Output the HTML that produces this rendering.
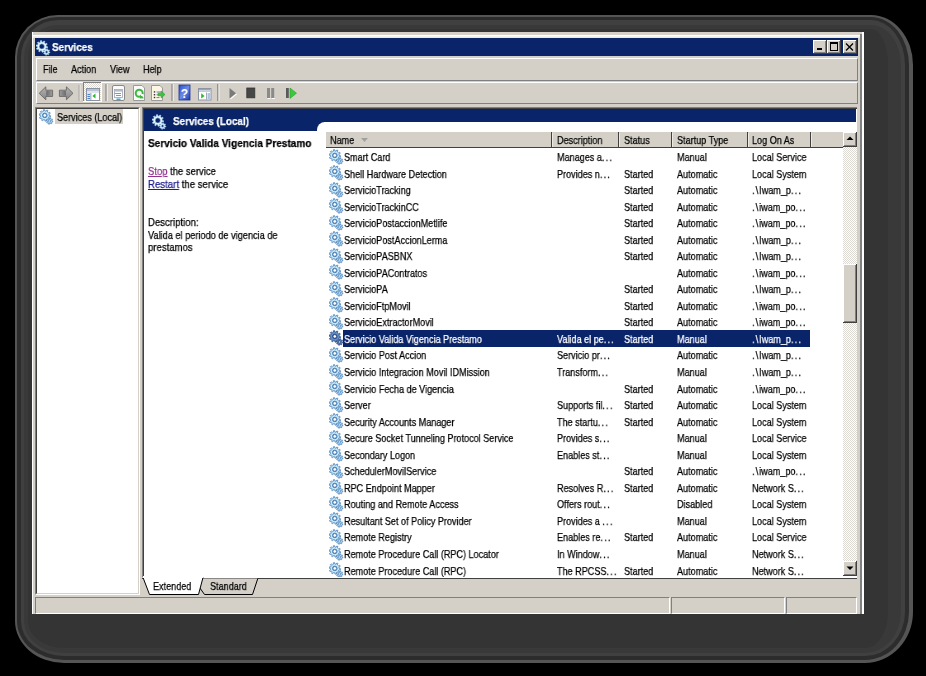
<!DOCTYPE html>
<html><head><meta charset="utf-8"><style>
*{margin:0;padding:0;box-sizing:border-box}
html,body{width:926px;height:676px;overflow:hidden;background:#000}
body{position:relative;font-family:"Liberation Sans",sans-serif;font-size:11px;color:#000}
.a{position:absolute}
.t{position:absolute;white-space:nowrap;transform-origin:0 0;line-height:13px;font-size:11px;will-change:transform;-webkit-text-stroke:0.25px currentColor}
.up{border-top:1px solid #fff;border-left:1px solid #fff;border-right:1px solid #808080;border-bottom:1px solid #808080}
.dn{border-top:1px solid #808080;border-left:1px solid #808080;border-right:1px solid #fff;border-bottom:1px solid #fff}
.ic{position:absolute;width:16px;height:16px}
.el{letter-spacing:1.5px}
.bs{margin:0 1px 0 1.5px}
</style></head><body>
<svg width="0" height="0" style="position:absolute"><defs>
<symbol id="gear" viewBox="0 0 16 16">
 <path d="M13.00 12.00 L13.89 12.21 L13.72 13.07 L12.82 12.92 L12.30 13.70 L12.30 13.70 L12.78 14.48 L12.05 14.96 L11.52 14.22 L10.60 14.40 L10.60 14.40 L10.39 15.29 L9.53 15.12 L9.68 14.22 L8.90 13.70 L8.90 13.70 L8.12 14.18 L7.64 13.45 L8.38 12.92 L8.20 12.00 L8.20 12.00 L7.31 11.79 L7.48 10.93 L8.38 11.08 L8.90 10.30 L8.90 10.30 L8.42 9.52 L9.15 9.04 L9.68 9.78 L10.60 9.60 L10.60 9.60 L10.81 8.71 L11.67 8.88 L11.52 9.78 L12.30 10.30 L12.30 10.30 L13.08 9.82 L13.56 10.55 L12.82 11.08 L13.00 12.00Z M9.5 12a1.1 1.1 0 1 0 2.2 0a1.1 1.1 0 1 0 -2.2 0Z" fill="#b8e0f6" fill-rule="evenodd" stroke="#5286bc" stroke-width="0.8"/>
 <path d="M10.20 6.40 L11.59 6.69 L11.40 7.91 L9.98 7.76 L9.36 8.99 L9.36 8.99 L10.32 10.04 L9.44 10.92 L8.39 9.96 L7.16 10.58 L7.16 10.58 L7.31 12.00 L6.09 12.19 L5.80 10.80 L4.44 10.58 L4.44 10.58 L3.73 11.82 L2.63 11.26 L3.21 9.96 L2.24 8.99 L2.24 8.99 L0.94 9.57 L0.38 8.47 L1.62 7.76 L1.40 6.40 L1.40 6.40 L0.01 6.11 L0.20 4.89 L1.62 5.04 L2.24 3.81 L2.24 3.81 L1.28 2.76 L2.16 1.88 L3.21 2.84 L4.44 2.22 L4.44 2.22 L4.29 0.80 L5.51 0.61 L5.80 2.00 L7.16 2.22 L7.16 2.22 L7.87 0.98 L8.97 1.54 L8.39 2.84 L9.36 3.81 L9.36 3.81 L10.66 3.23 L11.22 4.33 L9.98 5.04 L10.20 6.40Z M4.0 6.4a1.8 1.8 0 1 0 3.6 0a1.8 1.8 0 1 0 -3.6 0Z" fill="#c8ecfa" fill-rule="evenodd" stroke="#4f82b8" stroke-width="0.8"/>
 <circle cx="5.8" cy="6.4" r="2.3" fill="none" stroke="#4e7fb6" stroke-width="1"/>
</symbol>
<symbol id="gearw" viewBox="0 0 16 16">
 <path d="M13.00 12.00 L13.89 12.21 L13.72 13.07 L12.82 12.92 L12.30 13.70 L12.30 13.70 L12.78 14.48 L12.05 14.96 L11.52 14.22 L10.60 14.40 L10.60 14.40 L10.39 15.29 L9.53 15.12 L9.68 14.22 L8.90 13.70 L8.90 13.70 L8.12 14.18 L7.64 13.45 L8.38 12.92 L8.20 12.00 L8.20 12.00 L7.31 11.79 L7.48 10.93 L8.38 11.08 L8.90 10.30 L8.90 10.30 L8.42 9.52 L9.15 9.04 L9.68 9.78 L10.60 9.60 L10.60 9.60 L10.81 8.71 L11.67 8.88 L11.52 9.78 L12.30 10.30 L12.30 10.30 L13.08 9.82 L13.56 10.55 L12.82 11.08 L13.00 12.00Z M9.4 12a1.2 1.2 0 1 0 2.4 0a1.2 1.2 0 1 0 -2.4 0Z" fill="#d8f2fc" fill-rule="evenodd" stroke="#a8d0ee" stroke-width="0.6"/>
 <path d="M10.20 6.40 L11.59 6.69 L11.40 7.91 L9.98 7.76 L9.36 8.99 L9.36 8.99 L10.32 10.04 L9.44 10.92 L8.39 9.96 L7.16 10.58 L7.16 10.58 L7.31 12.00 L6.09 12.19 L5.80 10.80 L4.44 10.58 L4.44 10.58 L3.73 11.82 L2.63 11.26 L3.21 9.96 L2.24 8.99 L2.24 8.99 L0.94 9.57 L0.38 8.47 L1.62 7.76 L1.40 6.40 L1.40 6.40 L0.01 6.11 L0.20 4.89 L1.62 5.04 L2.24 3.81 L2.24 3.81 L1.28 2.76 L2.16 1.88 L3.21 2.84 L4.44 2.22 L4.44 2.22 L4.29 0.80 L5.51 0.61 L5.80 2.00 L7.16 2.22 L7.16 2.22 L7.87 0.98 L8.97 1.54 L8.39 2.84 L9.36 3.81 L9.36 3.81 L10.66 3.23 L11.22 4.33 L9.98 5.04 L10.20 6.40Z M3.1999999999999997 6.4a2.6 2.6 0 1 0 5.2 0a2.6 2.6 0 1 0 -5.2 0Z" fill="#e4f6fe" fill-rule="evenodd" stroke="#b0d8f0" stroke-width="0.6"/>
</symbol>
<symbol id="gearsel" viewBox="0 0 16 16">
 <path d="M13.00 12.00 L13.89 12.21 L13.72 13.07 L12.82 12.92 L12.30 13.70 L12.30 13.70 L12.78 14.48 L12.05 14.96 L11.52 14.22 L10.60 14.40 L10.60 14.40 L10.39 15.29 L9.53 15.12 L9.68 14.22 L8.90 13.70 L8.90 13.70 L8.12 14.18 L7.64 13.45 L8.38 12.92 L8.20 12.00 L8.20 12.00 L7.31 11.79 L7.48 10.93 L8.38 11.08 L8.90 10.30 L8.90 10.30 L8.42 9.52 L9.15 9.04 L9.68 9.78 L10.60 9.60 L10.60 9.60 L10.81 8.71 L11.67 8.88 L11.52 9.78 L12.30 10.30 L12.30 10.30 L13.08 9.82 L13.56 10.55 L12.82 11.08 L13.00 12.00Z M9.5 12a1.1 1.1 0 1 0 2.2 0a1.1 1.1 0 1 0 -2.2 0Z" fill="#5a82b8" fill-rule="evenodd" stroke="#2a4c88" stroke-width="0.8"/>
 <path d="M10.20 6.40 L11.59 6.69 L11.40 7.91 L9.98 7.76 L9.36 8.99 L9.36 8.99 L10.32 10.04 L9.44 10.92 L8.39 9.96 L7.16 10.58 L7.16 10.58 L7.31 12.00 L6.09 12.19 L5.80 10.80 L4.44 10.58 L4.44 10.58 L3.73 11.82 L2.63 11.26 L3.21 9.96 L2.24 8.99 L2.24 8.99 L0.94 9.57 L0.38 8.47 L1.62 7.76 L1.40 6.40 L1.40 6.40 L0.01 6.11 L0.20 4.89 L1.62 5.04 L2.24 3.81 L2.24 3.81 L1.28 2.76 L2.16 1.88 L3.21 2.84 L4.44 2.22 L4.44 2.22 L4.29 0.80 L5.51 0.61 L5.80 2.00 L7.16 2.22 L7.16 2.22 L7.87 0.98 L8.97 1.54 L8.39 2.84 L9.36 3.81 L9.36 3.81 L10.66 3.23 L11.22 4.33 L9.98 5.04 L10.20 6.40Z M4.0 6.4a1.8 1.8 0 1 0 3.6 0a1.8 1.8 0 1 0 -3.6 0Z" fill="#6a90c4" fill-rule="evenodd" stroke="#2a4c88" stroke-width="0.8"/>
 <circle cx="5.8" cy="6.4" r="2.3" fill="none" stroke="#2a4c88" stroke-width="0.9"/>
</symbol>
<pattern id="dith" width="2" height="2" patternUnits="userSpaceOnUse"><rect width="2" height="2" fill="#fff"/><rect width="1" height="1" fill="#dcd9d2"/><rect x="1" y="1" width="1" height="1" fill="#dcd9d2"/></pattern>
</defs></svg>
<div class="a" style="left:15px;top:15px;width:898px;height:648px;border-radius:43px 42px 48px 49px / 42px 50px 51px 42px;background:#555"></div>
<div class="a" style="left:17px;top:17px;width:892px;height:643px;border-radius:41px 38px 44px 47px / 40px 48px 48px 39px;background:#2c2c2c"></div>
<div class="a" style="left:21px;top:20px;width:884px;height:636px;border-radius:37px 34px 40px 43px / 37px 45px 44px 35px;background:#404040"></div>
<div class="a" style="left:24px;top:25px;width:877px;height:628px;border-radius:34px 30px 36px 40px / 32px 40px 41px 32px;background:#393939"></div>
<div class="a" style="left:28px;top:29px;width:860px;height:619px;border-radius:30px 17px 23px 36px / 28px 36px 36px 27px;background:#343434"></div>
<div class="a" style="left:32px;top:32px;width:832px;height:582px;background:#d4d0c8"></div>
<div class="a" style="left:32px;top:32px;width:1px;height:582px;background:#fff"></div>
<div class="a" style="left:33px;top:35px;width:827px;height:1px;background:#fff"></div>
<div class="a" style="left:33px;top:36px;width:827px;height:1px;background:#f4f2ec"></div>
<div class="a" style="left:33px;top:37px;width:827px;height:1px;background:#ece9d8"></div>
<div class="a" style="left:860px;top:34px;width:2px;height:580px;background:#808080"></div>
<div class="a" style="left:862px;top:32px;width:2px;height:582px;background:#fff"></div>
<div class="a" style="left:35px;top:38px;width:823px;height:18px;background:#0a246a"></div>
<svg class="ic" style="left:36px;top:39.5px;width:16px;height:16px"><use href="#gearw"/></svg>
<div class="t" style="left:52px;top:41px;color:#fff;font-weight:bold;transform:scaleX(0.9);">Services</div>
<div class="a" style="left:813px;top:40px;width:14px;height:14px;background:#d4d0c8;box-shadow:inset -1px -1px 0 #404040,inset 1px 1px 0 #fff,inset -2px -2px 0 #808080"></div>
<div class="a" style="left:827px;top:40px;width:14px;height:14px;background:#d4d0c8;box-shadow:inset -1px -1px 0 #404040,inset 1px 1px 0 #fff,inset -2px -2px 0 #808080"></div>
<div class="a" style="left:843px;top:40px;width:14px;height:14px;background:#d4d0c8;box-shadow:inset -1px -1px 0 #404040,inset 1px 1px 0 #fff,inset -2px -2px 0 #808080"></div>
<div class="a" style="left:817px;top:48px;width:5px;height:2px;background:#000"></div>
<div class="a" style="left:830px;top:42px;width:8px;height:9px;border:1px solid #000;border-top-width:2px"></div>
<svg class="a" style="left:845px;top:43px" width="9" height="8"><path d="M1 0.5L8 7.5M8 0.5L1 7.5" stroke="#000" stroke-width="1.3"/></svg>
<div class="a up" style="left:36px;top:58px;width:822px;height:23px"></div>
<div class="t" style="left:43px;top:63px;color:#000;transform:scaleX(0.825);">File</div>
<div class="t" style="left:71px;top:63px;color:#000;transform:scaleX(0.825);">Action</div>
<div class="t" style="left:110px;top:63px;color:#000;transform:scaleX(0.825);">View</div>
<div class="t" style="left:143px;top:63px;color:#000;transform:scaleX(0.825);">Help</div>
<div class="a up" style="left:36px;top:82px;width:822px;height:22px"></div>

<svg class="a" style="left:36px;top:82px" width="280" height="22">
 <g transform="translate(-36,-82)">
  <!-- back arrow -->
  <defs><linearGradient id="ag" x1="0" y1="0" x2="0" y2="1"><stop offset="0" stop-color="#b4b4b4"/><stop offset="1" stop-color="#858585"/></linearGradient>
  <linearGradient id="sg1" x1="0" y1="0" x2="1" y2="0"><stop offset="0" stop-color="#6a6a6a"/><stop offset="1" stop-color="#9a9a9a"/></linearGradient>
  <linearGradient id="sg2" x1="1" y1="0" x2="0" y2="0"><stop offset="0" stop-color="#6a6a6a"/><stop offset="1" stop-color="#9a9a9a"/></linearGradient></defs>
  <path d="M39.2 93.3 L45.8 86.8 V90.2 H52.6 V96.4 H45.8 V99.8 Z" fill="url(#ag)" stroke="#666" stroke-width="0.9" stroke-linejoin="round"/>
  <path d="M46.3 90.9 H52 V95.7 H46.3Z" fill="url(#sg1)"/>
  <!-- forward arrow -->
  <path d="M73 93.3 L66.4 86.8 V90.2 H59.4 V96.4 H66.4 V99.8 Z" fill="url(#ag)" stroke="#666" stroke-width="0.9" stroke-linejoin="round"/>
  <path d="M60 90.9 H65.9 V95.7 H60Z" fill="url(#sg2)"/>
  <!-- sep -->
  <rect x="78.5" y="85" width="1.2" height="16" fill="#a8a8a8"/><rect x="79.7" y="85" width="1" height="16" fill="#e8e6e0"/>
  <!-- pressed button -->
  <rect x="83" y="82" width="19" height="20" fill="url(#dith)"/>
  <rect x="83" y="82" width="19" height="1" fill="#808080"/><rect x="83" y="82" width="1" height="20" fill="#808080"/>
  <rect x="83" y="101" width="19" height="1" fill="#fff"/><rect x="101" y="82" width="1" height="20" fill="#fff"/>
  <rect x="86.5" y="88.5" width="13" height="12" fill="#fff" stroke="#8894a6" stroke-width="1"/>
  <rect x="87" y="89" width="12" height="2" fill="#b8c4d4"/>
  <rect x="87" y="91.5" width="12" height="1" fill="#c0c8d8"/>
  <rect x="87" y="93" width="3.5" height="7" fill="#d8e4f0"/>
  <rect x="87.5" y="94" width="2.5" height="1" fill="#4a80d0"/><rect x="87.5" y="96" width="2.5" height="1" fill="#4a80d0"/><rect x="87.5" y="98" width="2.5" height="1" fill="#4a80d0"/>
  <rect x="90.5" y="93" width="0.8" height="7" fill="#8090a8"/>
  <path d="M95.5 93.6 V98.4 L92.4 96Z" fill="#2eb82e"/>
  <!-- sep -->
  <rect x="105.5" y="84" width="1.2" height="17" fill="#7a7a7a"/><rect x="106.7" y="84" width="1" height="17" fill="#f4f4f0"/>
  <!-- properties -->
  <rect x="112.5" y="85.5" width="12" height="15" rx="1.5" fill="#fafafa" stroke="#8a8a8a" stroke-width="1"/>
  <rect x="114.5" y="89.5" width="8" height="8" fill="#fff" stroke="#9aa4b4" stroke-width="0.8"/>
  <rect x="115" y="90" width="7" height="1.6" fill="#b0bccc"/>
  <rect x="116" y="93" width="5" height="0.9" fill="#7a8a9c"/><rect x="116" y="95" width="5" height="0.9" fill="#7a8a9c"/>
  <rect x="114.8" y="93" width="1" height="1" fill="#20a0e0"/>
  <rect x="116.5" y="98.5" width="4" height="1.6" fill="#30b0e8"/>
  <!-- refresh -->
  <path d="M133.5 85.5 H142 L144.5 88 V100.5 H133.5Z" fill="#fafafa" stroke="#9a9a9a" stroke-width="1"/>
  <circle cx="139.2" cy="93.3" r="3.5" fill="none" stroke="#3cb83c" stroke-width="2"/>
  <path d="M140.5 94.5 L144 98.2 L139.8 98.6Z" fill="#3cb83c"/>
  <rect x="141" y="94" width="2.5" height="2" fill="#fafafa"/>
  <!-- export -->
  <path d="M151.5 85.5 H160 L162.5 88 V100.5 H151.5Z" fill="#fbf7e4" stroke="#9a9a9a" stroke-width="1"/>
  <rect x="153.8" y="91.2" width="1.4" height="1.4" fill="#333"/><rect x="153.8" y="94" width="1.4" height="1.4" fill="#333"/><rect x="153.8" y="96.8" width="1.4" height="1.4" fill="#333"/>
  <rect x="156.5" y="91.5" width="4.5" height="1" fill="#7080b0"/><rect x="156.5" y="94.3" width="3" height="1" fill="#7080b0"/><rect x="156.5" y="97.1" width="3" height="1" fill="#7080b0"/>
  <path d="M158 93.2 H161.2 V91 L165 94.5 L161.2 98 V95.8 H158Z" fill="#40c040" stroke="#2c9c2c" stroke-width="0.6"/>
  <!-- sep -->
  <rect x="171.5" y="84" width="1.2" height="17" fill="#7a7a7a"/><rect x="172.7" y="84" width="1" height="17" fill="#f4f4f0"/>
  <!-- help -->
  <defs><linearGradient id="hg" x1="0" y1="0" x2="1" y2="1"><stop offset="0" stop-color="#2a50c8"/><stop offset="0.5" stop-color="#6c8ae8"/><stop offset="1" stop-color="#1c3aa8"/></linearGradient></defs>
  <rect x="179" y="85" width="11" height="15" fill="url(#hg)" stroke="#1a3090" stroke-width="0.8"/>
  <text x="184.5" y="97.6" font-family="Liberation Sans" font-weight="bold" font-size="12" fill="#fff" text-anchor="middle">?</text>
  <!-- action pane -->
  <rect x="198.5" y="88.5" width="12.5" height="11.5" fill="#fff" stroke="#8a94a4" stroke-width="1"/>
  <rect x="199" y="89" width="11.5" height="1.5" fill="#9aa6b8"/>
  <rect x="199" y="91" width="11.5" height="1" fill="#c4ccd8"/>
  <rect x="206" y="92.5" width="0.8" height="7" fill="#8a94a4"/>
  <rect x="207.5" y="93.5" width="2.5" height="1" fill="#5a8ad0"/><rect x="207.5" y="95.5" width="2.5" height="1" fill="#5a8ad0"/><rect x="207.5" y="97.5" width="2.5" height="1" fill="#5a8ad0"/>
  <path d="M201.2 93.2 V98.6 L204.6 95.9Z" fill="#2eb82e"/>
  <!-- sep -->
  <rect x="217.3" y="84" width="1.2" height="17" fill="#7a7a7a"/><rect x="218.5" y="84" width="1" height="17" fill="#f4f4f0"/>
  <!-- play (disabled) -->
  <path d="M229.5 88 L236 93.3 L229.5 98.6Z" fill="#7a7a7a"/>
  <path d="M230 98.8 L236.4 93.6 L237 94.2 L231 99.2Z" fill="#fff"/>
  <!-- stop -->
  <rect x="246.8" y="88" width="8" height="9.8" fill="#464646" stroke="#333" stroke-width="0.8"/>
  <!-- pause -->
  <rect x="267" y="88" width="3" height="10" fill="#8a8a8a"/><rect x="271.2" y="88" width="3" height="10" fill="#8a8a8a"/>
  <rect x="267.5" y="98" width="3" height="1" fill="#fff"/><rect x="271.7" y="98" width="3" height="1" fill="#fff"/>
  <!-- restart -->
  <rect x="286" y="88" width="2.8" height="10" fill="#5a5a5a"/>
  <path d="M290 88 L296.5 93.2 L290 98.4Z" fill="#3cc83c" stroke="#2aa02a" stroke-width="0.6"/>
 </g>
</svg>
<div class="a" style="left:35px;top:107px;width:105px;height:488px;background:#fff;border-top:1px solid #808080;border-left:1px solid #808080;border-right:1px solid #fff;border-bottom:1px solid #fff"></div>
<div class="a" style="left:36px;top:108px;width:103px;height:486px;border-top:1px solid #404040;border-left:1px solid #404040;border-right:1px solid #d4d0c8;border-bottom:1px solid #d4d0c8"></div>
<svg class="ic" style="left:39px;top:109px"><use href="#gear"/></svg>
<div class="a" style="left:55px;top:109px;width:68px;height:15px;background:#d4d0c8"></div>
<div class="t" style="left:56.5px;top:111px;color:#000;transform:scaleX(0.825);">Services (Local)</div>
<div class="a" style="left:142px;top:107px;width:715px;height:471px;background:#fff;border-top:1px solid #808080;border-left:1px solid #808080"></div>
<div class="a" style="left:143px;top:108px;width:714px;height:470px;border-top:1px solid #404040;border-left:1px solid #404040"></div>
<div class="a" style="left:144px;top:109px;width:712px;height:13px;background:#0a246a"></div>
<div class="a" style="left:144px;top:122px;width:180px;height:9px;background:#0a246a"></div>
<div class="a" style="left:317px;top:122px;width:20px;height:12px;background:#fff;border-top-left-radius:8px"></div>
<svg class="ic" style="left:152px;top:114px"><use href="#gearw"/></svg>
<div class="t" style="left:173px;top:115px;color:#fff;font-weight:bold;transform:scaleX(0.9);">Services (Local)</div>
<div class="t" style="left:148px;top:137px;color:#000;font-weight:bold;transform:scaleX(0.913);">Servicio Valida Vigencia Prestamo</div>
<div class="t" style="left:148px;top:165px;color:#000;transform:scaleX(0.86);"><span style="color:#90308f;text-decoration:underline">Stop</span> the service</div>
<div class="t" style="left:148px;top:178px;color:#000;transform:scaleX(0.875);"><span style="color:#1c1c90;text-decoration:underline">Restart</span> the service</div>
<div class="t" style="left:148px;top:216px;color:#000;transform:scaleX(0.87);">Description:</div>
<div class="t" style="left:148px;top:228.5px;color:#000;transform:scaleX(0.835);">Valida el periodo de vigencia de</div>
<div class="t" style="left:148px;top:241px;color:#000;transform:scaleX(0.87);">prestamos</div>
<div class="a" style="left:326px;top:132px;width:517px;height:16px;background:#d4d0c8"></div>
<div class="a" style="left:551px;top:132px;width:1px;height:15px;background:#404040"></div>
<div class="a" style="left:552px;top:133px;width:1px;height:14px;background:#eceae4"></div>
<div class="a" style="left:618px;top:132px;width:1px;height:15px;background:#404040"></div>
<div class="a" style="left:619px;top:133px;width:1px;height:14px;background:#eceae4"></div>
<div class="a" style="left:671px;top:132px;width:1px;height:15px;background:#404040"></div>
<div class="a" style="left:672px;top:133px;width:1px;height:14px;background:#eceae4"></div>
<div class="a" style="left:747px;top:132px;width:1px;height:15px;background:#404040"></div>
<div class="a" style="left:748px;top:133px;width:1px;height:14px;background:#eceae4"></div>
<div class="a" style="left:810px;top:132px;width:1px;height:15px;background:#404040"></div>
<div class="a" style="left:811px;top:133px;width:1px;height:14px;background:#eceae4"></div>
<div class="a" style="left:326px;top:147px;width:517px;height:1px;background:#404040"></div>
<div class="t" style="left:330px;top:134px;color:#000;transform:scaleX(0.825);">Name</div>
<div class="t" style="left:557px;top:134px;color:#000;transform:scaleX(0.825);">Description</div>
<div class="t" style="left:624px;top:134px;color:#000;transform:scaleX(0.825);">Status</div>
<div class="t" style="left:677px;top:134px;color:#000;transform:scaleX(0.825);">Startup Type</div>
<div class="t" style="left:752px;top:134px;color:#000;transform:scaleX(0.825);">Log On As</div>
<svg class="a" style="left:361px;top:138px" width="8" height="5"><path d="M0 0H7L3.5 4Z" fill="#a0a0a0"/></svg>
<svg class="ic" style="left:329px;top:148.50px"><use href="#gear"/></svg>
<div class="t" style="left:344px;top:151.0px;color:#000;transform:scaleX(0.825);">Smart Card</div>
<div class="t" style="left:557px;top:151.0px;color:#000;transform:scaleX(0.825);">Manages a<span class="el">...</span></div>
<div class="t" style="left:677px;top:151.0px;color:#000;transform:scaleX(0.825);">Manual</div>
<div class="t" style="left:752px;top:151.0px;color:#000;transform:scaleX(0.825);">Local Service</div>
<svg class="ic" style="left:329px;top:165.04px"><use href="#gear"/></svg>
<div class="t" style="left:344px;top:167.54px;color:#000;transform:scaleX(0.825);">Shell Hardware Detection</div>
<div class="t" style="left:557px;top:167.54px;color:#000;transform:scaleX(0.825);">Provides n<span class="el">...</span></div>
<div class="t" style="left:624px;top:167.54px;color:#000;transform:scaleX(0.825);">Started</div>
<div class="t" style="left:677px;top:167.54px;color:#000;transform:scaleX(0.825);">Automatic</div>
<div class="t" style="left:752px;top:167.54px;color:#000;transform:scaleX(0.825);">Local System</div>
<svg class="ic" style="left:329px;top:181.58px"><use href="#gear"/></svg>
<div class="t" style="left:344px;top:184.08px;color:#000;transform:scaleX(0.825);">ServicioTracking</div>
<div class="t" style="left:624px;top:184.08px;color:#000;transform:scaleX(0.825);">Started</div>
<div class="t" style="left:677px;top:184.08px;color:#000;transform:scaleX(0.825);">Automatic</div>
<div class="t" style="left:752px;top:184.08px;color:#000;transform:scaleX(0.825);">.<span class="bs">\</span>Iwam_p<span class="el">...</span></div>
<svg class="ic" style="left:329px;top:198.12px"><use href="#gear"/></svg>
<div class="t" style="left:344px;top:200.62px;color:#000;transform:scaleX(0.825);">ServicioTrackinCC</div>
<div class="t" style="left:624px;top:200.62px;color:#000;transform:scaleX(0.825);">Started</div>
<div class="t" style="left:677px;top:200.62px;color:#000;transform:scaleX(0.825);">Automatic</div>
<div class="t" style="left:752px;top:200.62px;color:#000;transform:scaleX(0.825);">.<span class="bs">\</span>iwam_po<span class="el">...</span></div>
<svg class="ic" style="left:329px;top:214.66px"><use href="#gear"/></svg>
<div class="t" style="left:344px;top:217.16px;color:#000;transform:scaleX(0.825);">ServicioPostaccionMetlife</div>
<div class="t" style="left:624px;top:217.16px;color:#000;transform:scaleX(0.825);">Started</div>
<div class="t" style="left:677px;top:217.16px;color:#000;transform:scaleX(0.825);">Automatic</div>
<div class="t" style="left:752px;top:217.16px;color:#000;transform:scaleX(0.825);">.<span class="bs">\</span>iwam_po<span class="el">...</span></div>
<svg class="ic" style="left:329px;top:231.20px"><use href="#gear"/></svg>
<div class="t" style="left:344px;top:233.7px;color:#000;transform:scaleX(0.825);">ServicioPostAccionLerma</div>
<div class="t" style="left:624px;top:233.7px;color:#000;transform:scaleX(0.825);">Started</div>
<div class="t" style="left:677px;top:233.7px;color:#000;transform:scaleX(0.825);">Automatic</div>
<div class="t" style="left:752px;top:233.7px;color:#000;transform:scaleX(0.825);">.<span class="bs">\</span>Iwam_p<span class="el">...</span></div>
<svg class="ic" style="left:329px;top:247.74px"><use href="#gear"/></svg>
<div class="t" style="left:344px;top:250.24px;color:#000;transform:scaleX(0.825);">ServicioPASBNX</div>
<div class="t" style="left:624px;top:250.24px;color:#000;transform:scaleX(0.825);">Started</div>
<div class="t" style="left:677px;top:250.24px;color:#000;transform:scaleX(0.825);">Automatic</div>
<div class="t" style="left:752px;top:250.24px;color:#000;transform:scaleX(0.825);">.<span class="bs">\</span>Iwam_p<span class="el">...</span></div>
<svg class="ic" style="left:329px;top:264.28px"><use href="#gear"/></svg>
<div class="t" style="left:344px;top:266.78px;color:#000;transform:scaleX(0.825);">ServicioPAContratos</div>
<div class="t" style="left:677px;top:266.78px;color:#000;transform:scaleX(0.825);">Automatic</div>
<div class="t" style="left:752px;top:266.78px;color:#000;transform:scaleX(0.825);">.<span class="bs">\</span>iwam_po<span class="el">...</span></div>
<svg class="ic" style="left:329px;top:280.82px"><use href="#gear"/></svg>
<div class="t" style="left:344px;top:283.32px;color:#000;transform:scaleX(0.825);">ServicioPA</div>
<div class="t" style="left:624px;top:283.32px;color:#000;transform:scaleX(0.825);">Started</div>
<div class="t" style="left:677px;top:283.32px;color:#000;transform:scaleX(0.825);">Automatic</div>
<div class="t" style="left:752px;top:283.32px;color:#000;transform:scaleX(0.825);">.<span class="bs">\</span>Iwam_p<span class="el">...</span></div>
<svg class="ic" style="left:329px;top:297.36px"><use href="#gear"/></svg>
<div class="t" style="left:344px;top:299.86px;color:#000;transform:scaleX(0.825);">ServicioFtpMovil</div>
<div class="t" style="left:624px;top:299.86px;color:#000;transform:scaleX(0.825);">Started</div>
<div class="t" style="left:677px;top:299.86px;color:#000;transform:scaleX(0.825);">Automatic</div>
<div class="t" style="left:752px;top:299.86px;color:#000;transform:scaleX(0.825);">.<span class="bs">\</span>iwam_po<span class="el">...</span></div>
<svg class="ic" style="left:329px;top:313.90px"><use href="#gear"/></svg>
<div class="t" style="left:344px;top:316.4px;color:#000;transform:scaleX(0.825);">ServicioExtractorMovil</div>
<div class="t" style="left:624px;top:316.4px;color:#000;transform:scaleX(0.825);">Started</div>
<div class="t" style="left:677px;top:316.4px;color:#000;transform:scaleX(0.825);">Automatic</div>
<div class="t" style="left:752px;top:316.4px;color:#000;transform:scaleX(0.825);">.<span class="bs">\</span>iwam_po<span class="el">...</span></div>
<div class="a" style="left:343px;top:330.44px;width:467px;height:16.54px;background:#0a246a"></div>
<svg class="ic" style="left:329px;top:330.44px"><use href="#gearsel"/></svg>
<div class="t" style="left:344px;top:332.94px;color:#fff;transform:scaleX(0.825);">Servicio Valida Vigencia Prestamo</div>
<div class="t" style="left:557px;top:332.94px;color:#fff;transform:scaleX(0.825);">Valida el pe<span class="el">...</span></div>
<div class="t" style="left:624px;top:332.94px;color:#fff;transform:scaleX(0.825);">Started</div>
<div class="t" style="left:677px;top:332.94px;color:#fff;transform:scaleX(0.825);">Manual</div>
<div class="t" style="left:752px;top:332.94px;color:#fff;transform:scaleX(0.825);">.<span class="bs">\</span>Iwam_p<span class="el">...</span></div>
<svg class="ic" style="left:329px;top:346.98px"><use href="#gear"/></svg>
<div class="t" style="left:344px;top:349.48px;color:#000;transform:scaleX(0.825);">Servicio Post Accion</div>
<div class="t" style="left:557px;top:349.48px;color:#000;transform:scaleX(0.825);">Servicio pr<span class="el">...</span></div>
<div class="t" style="left:677px;top:349.48px;color:#000;transform:scaleX(0.825);">Automatic</div>
<div class="t" style="left:752px;top:349.48px;color:#000;transform:scaleX(0.825);">.<span class="bs">\</span>Iwam_p<span class="el">...</span></div>
<svg class="ic" style="left:329px;top:363.52px"><use href="#gear"/></svg>
<div class="t" style="left:344px;top:366.02px;color:#000;transform:scaleX(0.825);">Servicio Integracion Movil IDMission</div>
<div class="t" style="left:557px;top:366.02px;color:#000;transform:scaleX(0.825);">Transform<span class="el">...</span></div>
<div class="t" style="left:677px;top:366.02px;color:#000;transform:scaleX(0.825);">Manual</div>
<div class="t" style="left:752px;top:366.02px;color:#000;transform:scaleX(0.825);">.<span class="bs">\</span>Iwam_p<span class="el">...</span></div>
<svg class="ic" style="left:329px;top:380.06px"><use href="#gear"/></svg>
<div class="t" style="left:344px;top:382.56px;color:#000;transform:scaleX(0.825);">Servicio Fecha de Vigencia</div>
<div class="t" style="left:624px;top:382.56px;color:#000;transform:scaleX(0.825);">Started</div>
<div class="t" style="left:677px;top:382.56px;color:#000;transform:scaleX(0.825);">Automatic</div>
<div class="t" style="left:752px;top:382.56px;color:#000;transform:scaleX(0.825);">.<span class="bs">\</span>iwam_po<span class="el">...</span></div>
<svg class="ic" style="left:329px;top:396.60px"><use href="#gear"/></svg>
<div class="t" style="left:344px;top:399.1px;color:#000;transform:scaleX(0.825);">Server</div>
<div class="t" style="left:557px;top:399.1px;color:#000;transform:scaleX(0.825);">Supports fil<span class="el">...</span></div>
<div class="t" style="left:624px;top:399.1px;color:#000;transform:scaleX(0.825);">Started</div>
<div class="t" style="left:677px;top:399.1px;color:#000;transform:scaleX(0.825);">Automatic</div>
<div class="t" style="left:752px;top:399.1px;color:#000;transform:scaleX(0.825);">Local System</div>
<svg class="ic" style="left:329px;top:413.14px"><use href="#gear"/></svg>
<div class="t" style="left:344px;top:415.64px;color:#000;transform:scaleX(0.825);">Security Accounts Manager</div>
<div class="t" style="left:557px;top:415.64px;color:#000;transform:scaleX(0.825);">The startu<span class="el">...</span></div>
<div class="t" style="left:624px;top:415.64px;color:#000;transform:scaleX(0.825);">Started</div>
<div class="t" style="left:677px;top:415.64px;color:#000;transform:scaleX(0.825);">Automatic</div>
<div class="t" style="left:752px;top:415.64px;color:#000;transform:scaleX(0.825);">Local System</div>
<svg class="ic" style="left:329px;top:429.68px"><use href="#gear"/></svg>
<div class="t" style="left:344px;top:432.18px;color:#000;transform:scaleX(0.825);">Secure Socket Tunneling Protocol Service</div>
<div class="t" style="left:557px;top:432.18px;color:#000;transform:scaleX(0.825);">Provides s<span class="el">...</span></div>
<div class="t" style="left:677px;top:432.18px;color:#000;transform:scaleX(0.825);">Manual</div>
<div class="t" style="left:752px;top:432.18px;color:#000;transform:scaleX(0.825);">Local Service</div>
<svg class="ic" style="left:329px;top:446.22px"><use href="#gear"/></svg>
<div class="t" style="left:344px;top:448.72px;color:#000;transform:scaleX(0.825);">Secondary Logon</div>
<div class="t" style="left:557px;top:448.72px;color:#000;transform:scaleX(0.825);">Enables st<span class="el">...</span></div>
<div class="t" style="left:677px;top:448.72px;color:#000;transform:scaleX(0.825);">Manual</div>
<div class="t" style="left:752px;top:448.72px;color:#000;transform:scaleX(0.825);">Local System</div>
<svg class="ic" style="left:329px;top:462.76px"><use href="#gear"/></svg>
<div class="t" style="left:344px;top:465.26px;color:#000;transform:scaleX(0.825);">SchedulerMovilService</div>
<div class="t" style="left:624px;top:465.26px;color:#000;transform:scaleX(0.825);">Started</div>
<div class="t" style="left:677px;top:465.26px;color:#000;transform:scaleX(0.825);">Automatic</div>
<div class="t" style="left:752px;top:465.26px;color:#000;transform:scaleX(0.825);">.<span class="bs">\</span>iwam_po<span class="el">...</span></div>
<svg class="ic" style="left:329px;top:479.30px"><use href="#gear"/></svg>
<div class="t" style="left:344px;top:481.8px;color:#000;transform:scaleX(0.825);">RPC Endpoint Mapper</div>
<div class="t" style="left:557px;top:481.8px;color:#000;transform:scaleX(0.825);">Resolves R<span class="el">...</span></div>
<div class="t" style="left:624px;top:481.8px;color:#000;transform:scaleX(0.825);">Started</div>
<div class="t" style="left:677px;top:481.8px;color:#000;transform:scaleX(0.825);">Automatic</div>
<div class="t" style="left:752px;top:481.8px;color:#000;transform:scaleX(0.825);">Network S<span class="el">...</span></div>
<svg class="ic" style="left:329px;top:495.84px"><use href="#gear"/></svg>
<div class="t" style="left:344px;top:498.34px;color:#000;transform:scaleX(0.825);">Routing and Remote Access</div>
<div class="t" style="left:557px;top:498.34px;color:#000;transform:scaleX(0.825);">Offers rout<span class="el">...</span></div>
<div class="t" style="left:677px;top:498.34px;color:#000;transform:scaleX(0.825);">Disabled</div>
<div class="t" style="left:752px;top:498.34px;color:#000;transform:scaleX(0.825);">Local System</div>
<svg class="ic" style="left:329px;top:512.38px"><use href="#gear"/></svg>
<div class="t" style="left:344px;top:514.88px;color:#000;transform:scaleX(0.825);">Resultant Set of Policy Provider</div>
<div class="t" style="left:557px;top:514.88px;color:#000;transform:scaleX(0.825);">Provides a <span class="el">...</span></div>
<div class="t" style="left:677px;top:514.88px;color:#000;transform:scaleX(0.825);">Manual</div>
<div class="t" style="left:752px;top:514.88px;color:#000;transform:scaleX(0.825);">Local System</div>
<svg class="ic" style="left:329px;top:528.92px"><use href="#gear"/></svg>
<div class="t" style="left:344px;top:531.42px;color:#000;transform:scaleX(0.825);">Remote Registry</div>
<div class="t" style="left:557px;top:531.42px;color:#000;transform:scaleX(0.825);">Enables re<span class="el">...</span></div>
<div class="t" style="left:624px;top:531.42px;color:#000;transform:scaleX(0.825);">Started</div>
<div class="t" style="left:677px;top:531.42px;color:#000;transform:scaleX(0.825);">Automatic</div>
<div class="t" style="left:752px;top:531.42px;color:#000;transform:scaleX(0.825);">Local Service</div>
<svg class="ic" style="left:329px;top:545.46px"><use href="#gear"/></svg>
<div class="t" style="left:344px;top:547.96px;color:#000;transform:scaleX(0.825);">Remote Procedure Call (RPC) Locator</div>
<div class="t" style="left:557px;top:547.96px;color:#000;transform:scaleX(0.825);">In Window<span class="el">...</span></div>
<div class="t" style="left:677px;top:547.96px;color:#000;transform:scaleX(0.825);">Manual</div>
<div class="t" style="left:752px;top:547.96px;color:#000;transform:scaleX(0.825);">Network S<span class="el">...</span></div>
<svg class="ic" style="left:329px;top:562.00px"><use href="#gear"/></svg>
<div class="t" style="left:344px;top:564.5px;color:#000;transform:scaleX(0.825);">Remote Procedure Call (RPC)</div>
<div class="t" style="left:557px;top:564.5px;color:#000;transform:scaleX(0.825);">The RPCSS<span class="el">...</span></div>
<div class="t" style="left:624px;top:564.5px;color:#000;transform:scaleX(0.825);">Started</div>
<div class="t" style="left:677px;top:564.5px;color:#000;transform:scaleX(0.825);">Automatic</div>
<div class="t" style="left:752px;top:564.5px;color:#000;transform:scaleX(0.825);">Network S<span class="el">...</span></div>
<svg class="a" style="left:843px;top:133px" width="14" height="443"><rect width="14" height="443" fill="url(#dith)"/></svg>
<div class="a" style="left:843px;top:132px;width:14px;height:15px;background:#d4d0c8;box-shadow:inset -1px -1px 0 #404040,inset 1px 1px 0 #fff,inset -2px -2px 0 #808080"></div>
<div class="a" style="left:843px;top:561px;width:14px;height:15px;background:#d4d0c8;box-shadow:inset -1px -1px 0 #404040,inset 1px 1px 0 #fff,inset -2px -2px 0 #808080"></div>
<svg class="a" style="left:846px;top:136px" width="8" height="5"><path d="M4 0.5L7.5 4H0.5Z" fill="#000"/></svg>
<svg class="a" style="left:846px;top:566px" width="8" height="5"><path d="M0.5 0.5H7.5L4 4Z" fill="#000"/></svg>
<div class="a" style="left:843px;top:264px;width:14px;height:59px;background:#d4d0c8;box-shadow:inset -1px -1px 0 #404040,inset 1px 1px 0 #fff,inset -2px -2px 0 #808080"></div>
<div class="a" style="left:142px;top:578px;width:715px;height:18px;background:#d4d0c8"></div>

<svg class="a" style="left:140px;top:576px" width="720" height="22">
 <g transform="translate(-140,-576)">
  <rect x="142" y="578" width="715" height="1" fill="#404040"/>
  <rect x="142" y="577" width="715" height="1" fill="#fff"/>
  <!-- standard tab (behind) -->
  <path d="M202 578.5 L198.5 586 L204.5 594.5 H252.5 L257.8 578.5" fill="#d4d0c8" stroke="#000" stroke-width="1"/>
  <!-- extended tab (selected) -->
  <path d="M143 577.5 L149.5 594.5 H198.5 L203 577.5Z" fill="#fff"/>
  <path d="M143 577.5 L149.5 594.5 H198.5 L203 577.5" fill="none" stroke="#000" stroke-width="1"/>
  <rect x="143" y="576" width="60" height="2" fill="#fff"/>
 </g>
</svg>
<div class="t" style="left:152.5px;top:580px;color:#000;transform:scaleX(0.825);">Extended</div>
<div class="t" style="left:209.5px;top:580px;color:#000;transform:scaleX(0.825);">Standard</div>
<div class="a dn" style="left:35px;top:597px;width:635px;height:17px"></div>
<div class="a dn" style="left:671px;top:597px;width:114px;height:17px"></div>
<div class="a dn" style="left:786px;top:597px;width:71px;height:17px"></div>
</body></html>
